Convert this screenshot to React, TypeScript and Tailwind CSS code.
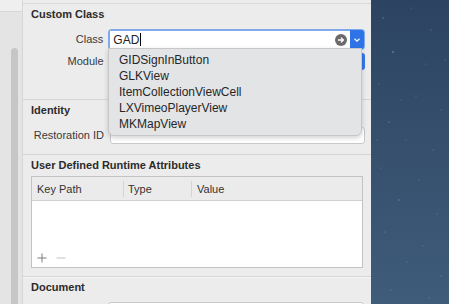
import React from "react";

const suggestions = [
  "GIDSignInButton",
  "GLKView",
  "ItemCollectionViewCell",
  "LXVimeoPlayerView",
  "MKMapView",
];

// fixed star field for the desktop strip on the right
const stars: [number, number, number][] = [
  [12, 18, 0.7], [40, 8, 0.5], [60, 30, 0.6], [22, 52, 0.9], [55, 64, 0.5],
  [8, 84, 0.5], [45, 96, 0.6], [70, 110, 0.5], [18, 122, 0.7], [35, 140, 0.5],
  [62, 150, 0.6], [10, 168, 0.5], [48, 180, 0.5], [28, 200, 0.7], [66, 214, 0.5],
  [14, 232, 0.6], [52, 246, 0.5], [36, 262, 0.5], [70, 276, 0.6], [20, 290, 0.5],
  [58, 298, 0.5], [6, 140, 0.5], [74, 60, 0.5], [30, 100, 0.5],
];

function Field({ className = "" }: { className?: string }) {
  return (
    <div
      className={
        "h-[17px] bg-white border border-[#c8c8c8] rounded-[3px] " + className
      }
    />
  );
}

export default function App() {
  return (
    <div
      className="w-[449px] h-[304px] flex overflow-hidden text-[11px] text-[#2b2b2b]"
      style={{ fontFamily: '"Liberation Sans", Arial, sans-serif' }}
    >
      {/* left strip with scroller */}
      <div className="w-[23px] shrink-0 flex flex-col bg-[#e4e4e4] border-r border-[#d6d6d6]">
        <div className="h-[12px] bg-[#efefef] border-b border-[#d8d8d8]" />
        <div className="flex-1 flex pl-[11px] pt-[36px]">
          <div className="w-[7px] h-full bg-[#c6c6c6] rounded-t-full" />
        </div>
      </div>

      {/* inspector panel */}
      <div className="w-[348px] shrink-0 relative bg-[#ececec] flex flex-col overflow-hidden">
        <div className="h-[4px] shrink-0 border-b border-[#d9d9d9]" />

        {/* Custom Class */}
        <div className="h-[96px] shrink-0 border-b border-[#d5d5d5] pl-[8px] pr-[6px]">
          <div className="font-bold mt-[3px] leading-[14px]">Custom Class</div>
          <div className="flex items-center mt-[8px] h-[21px]">
            <div className="w-[78px] text-right pr-[5px] text-[#3a3a3a]">Class</div>
            <div className="flex h-[21px] w-[259px] rounded-[4px] bg-[#7fa9ea] p-[2px]">
              <div className="flex-1 bg-white flex items-center pl-[3px] text-[12px] text-[#222]">
                GAD
                <span className="w-px h-[13px] bg-black ml-px" />
                <div className="ml-auto mr-[3px] w-[12px] h-[12px] rounded-full bg-[#6b6b6b] flex items-center justify-center">
                  <svg width="8" height="8" viewBox="0 0 8 8">
                    <path d="M1 4h5M4 1.6 6.4 4 4 6.4" stroke="#fff" strokeWidth="1.3" fill="none" />
                  </svg>
                </div>
              </div>
              <div className="w-[14px] -my-[1px] -mr-[1px] bg-[#2f74e6] rounded-r-[3px] flex items-center justify-center">
                <svg width="8" height="6" viewBox="0 0 8 6">
                  <path d="M1.5 1.8 4 4.2 6.5 1.8" stroke="#fff" strokeWidth="1.2" fill="none" />
                </svg>
              </div>
            </div>
          </div>
          <div className="flex items-center mt-[2px] h-[18px]">
            <div className="w-[78px] text-right pr-[5px] text-[#3a3a3a]">Module</div>
            <div className="flex h-[17px] w-[257px] ml-px">
              <Field className="flex-1 rounded-r-none" />
              <div className="w-[11px] bg-[#3479e8] rounded-r-[3px]" />
            </div>
          </div>
        </div>

        {/* Identity */}
        <div className="h-[55px] shrink-0 border-b border-[#d5d5d5] pl-[8px] pr-[6px]">
          <div className="font-bold mt-[3px] leading-[14px]">Identity</div>
          <div className="flex items-center mt-[9px] h-[18px]">
            <div className="w-[78px] text-right pr-[5px] text-[#3a3a3a] whitespace-nowrap">
              Restoration ID
            </div>
            <Field className="w-[255px] ml-px" />
          </div>
        </div>

        {/* User Defined Runtime Attributes */}
        <div className="h-[122px] shrink-0 border-b border-[#d5d5d5] pl-[8px] pr-[8px]">
          <div className="font-bold mt-[3px] leading-[14px]">
            User Defined Runtime Attributes
          </div>
          <div className="mt-[4px] w-[332px] h-[92px] border border-[#c3c3c3] bg-white flex flex-col">
            <div className="h-[24px] bg-[#ebebeb] border-b border-[#cfcfcf] flex items-center text-[#333]">
              <div className="w-[92px] pl-[5px] border-r border-[#d4d4d4] h-[16px] leading-[16px]">
                Key Path
              </div>
              <div className="w-[68px] pl-[4px] border-r border-[#d4d4d4] h-[16px] leading-[16px]">
                Type
              </div>
              <div className="pl-[5px] leading-[16px]">Value</div>
            </div>
            <div className="flex-1 flex items-end pb-[4px] pl-[5px] gap-[9px]">
              <svg width="10" height="10" viewBox="0 0 10 10">
                <path d="M5 0.5v9M0.5 5h9" stroke="#7a7a7a" strokeWidth="1" />
              </svg>
              <svg width="10" height="10" viewBox="0 0 10 10">
                <path d="M0.5 5h9" stroke="#c4c4c4" strokeWidth="1" />
              </svg>
            </div>
          </div>
        </div>

        {/* Document */}
        <div className="shrink-0 pl-[8px] pr-[6px] border-t border-[#f6f6f6]">
          <div className="font-bold mt-[2px] leading-[14px]">Document</div>
          <div className="flex mt-[8px]">
            <div className="w-[77px]" />
            <Field className="w-[256px]" />
          </div>
        </div>

        {/* autocomplete popup */}
        <div className="absolute left-[85px] top-[48px] w-[254px] h-[88px] bg-[#e3e4e6] border border-[#c7c7c9] rounded-b-[6px] shadow-[0_2px_5px_rgba(0,0,0,0.18)] pt-[3px] pl-[10px] text-[12px] text-[#262626]">
          {suggestions.map((s) => (
            <div key={s} className="h-[16px] leading-[16px]">
              {s}
            </div>
          ))}
        </div>
      </div>

      {/* desktop background */}
      <div className="flex-1 bg-gradient-to-b from-[#2c4461] to-[#405c7b]">
        <svg width="78" height="304" viewBox="0 0 78 304">
          {stars.map(([x, y, r], i) => (
            <circle key={i} cx={x} cy={y} r={r} fill="#c9d6e6" opacity={0.4} />
          ))}
        </svg>
      </div>
    </div>
  );
}
